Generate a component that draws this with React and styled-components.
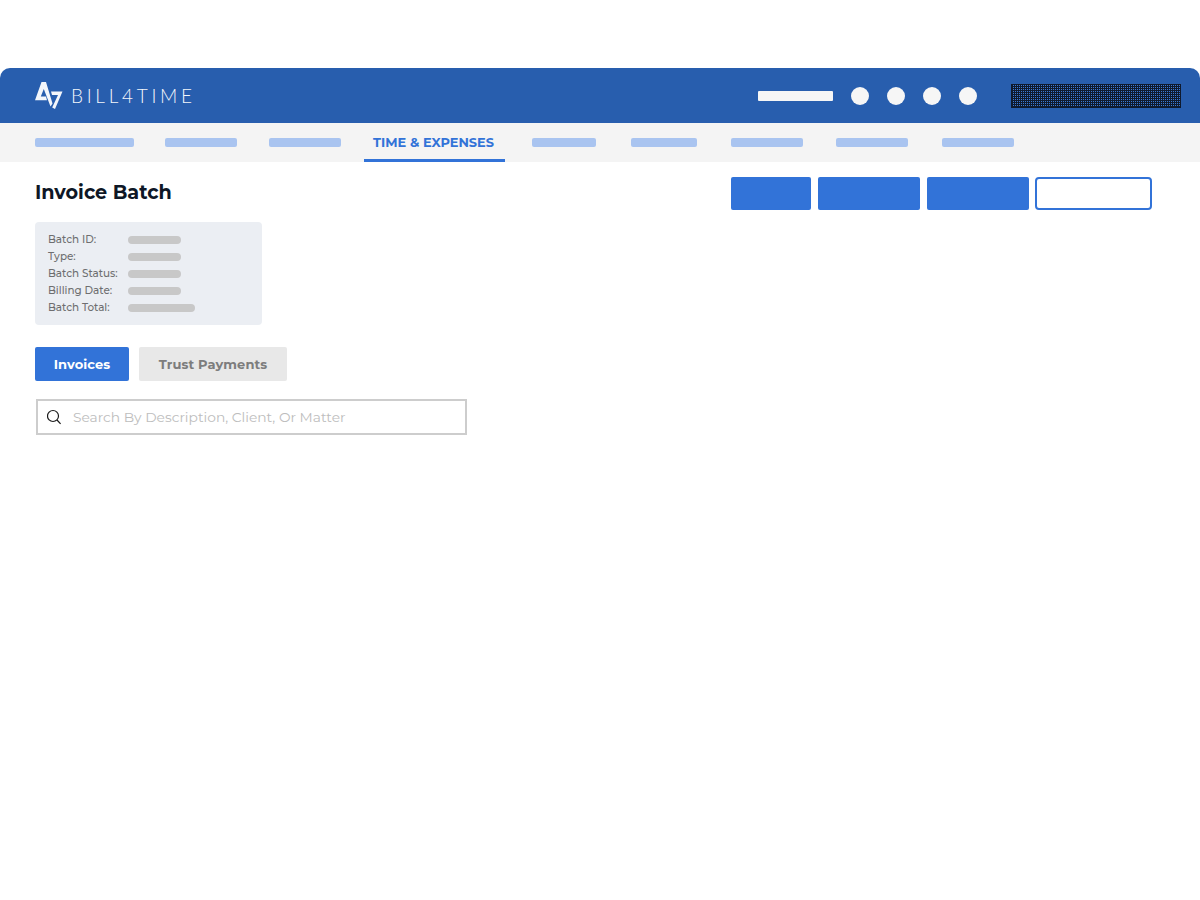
import React from 'react';
import styled, { createGlobalStyle } from 'styled-components';

const GlobalStyle = createGlobalStyle`
  body {
    margin: 0;
    background: #fff;
    font-family: "Montserrat", "Inter", "Liberation Sans", sans-serif;
  }
`;

const Page = styled.div`
  padding-top: 68px;
`;

const Header = styled.header`
  display: flex;
  align-items: center;
  justify-content: space-between;
  height: 55px;
  padding: 0 19px 0 35px;
  background: #285eae;
  border-radius: 10px 10px 0 0;
`;

const Brand = styled.div`
  display: flex;
  align-items: center;
  gap: 8px;
`;

const BrandName = styled.span`
  font-family: "Lato", sans-serif;
  font-weight: 300;
  font-size: 19px;
  letter-spacing: 3.7px;
  line-height: 1;
  color: #f3f6fb;
`;

const HeaderRight = styled.div`
  display: flex;
  align-items: center;
`;

const UserBar = styled.div`
  width: 75px;
  height: 10px;
  margin-right: 18px;
  background: #f6f6f6;
  border-radius: 1px;
`;

const Circle = styled.div`
  width: 18px;
  height: 18px;
  margin-right: 18px;
  background: #f6f6f6;
  border-radius: 50%;
`;

const SearchBlock = styled.div`
  box-sizing: border-box;
  width: 170px;
  height: 24px;
  margin-left: 16px;
  border: 1px solid #0f1a2e;
  background: repeating-conic-gradient(#3a78d4 0 25%, #0f1a2e 0 100%) 0 0 / 2px 2px;
`;

const Nav = styled.nav`
  display: flex;
  align-items: center;
  height: 39px;
  padding-left: 35px;
  background: #f4f4f4;
`;

const NavBar = styled.div`
  width: ${p => p.$w}px;
  height: 9px;
  margin-right: ${p => p.$gap}px;
  background: #a9c4f0;
  border-radius: 2px;
`;

const NavTab = styled.div`
  display: flex;
  align-items: center;
  justify-content: center;
  box-sizing: border-box;
  align-self: stretch;
  width: 141px;
  margin-right: 27px;
  padding: 2px 2px 0 0;
  border-bottom: 3px solid #3273d8;
  font-size: 12.9px;
  font-weight: 700;
  color: #3273d8;
  white-space: nowrap;
`;

const Content = styled.main`
  padding: 15px 48px 0 35px;
`;

const TitleRow = styled.div`
  display: flex;
  align-items: center;
  justify-content: space-between;
`;

const Title = styled.h1`
  margin: -4px 0 0;
  font-size: 19.2px;
  font-weight: 700;
  color: #0e1726;
`;

const Actions = styled.div`
  display: flex;
  gap: 7px;
`;

const ActionButton = styled.div`
  box-sizing: border-box;
  width: ${p => p.$w}px;
  height: 33px;
  margin-left: ${p => (p.$outline ? -1 : 0)}px;
  background: ${p => (p.$outline ? '#fff' : '#3273d8')};
  border: ${p => (p.$outline ? '2px solid #3273d8' : 'none')};
  border-radius: ${p => (p.$outline ? 4 : 2)}px;
`;

const InfoCard = styled.div`
  display: grid;
  grid-template-columns: 80px 1fr;
  grid-auto-rows: 17px;
  align-items: center;
  box-sizing: border-box;
  width: 227px;
  height: 103px;
  margin-top: 12px;
  padding: 9px 13px;
  background: #ebeef3;
  border-radius: 4px;
`;

const InfoLabel = styled.span`
  font-size: 10.4px;
  font-weight: 500;
  color: #6e6e70;
  white-space: nowrap;
`;

const InfoBar = styled.div`
  width: ${p => p.$w}px;
  height: 8px;
  background: #c8c8c8;
  border-radius: 4px;
`;

const Tabs = styled.div`
  display: flex;
  gap: 10px;
  margin-top: 22px;
`;

const Tab = styled.div`
  display: flex;
  align-items: center;
  justify-content: center;
  width: ${p => p.$w}px;
  height: 34px;
  font-size: 13px;
  letter-spacing: 0.1px;
  font-weight: 700;
  background: ${p => (p.$active ? '#3273d8' : '#e8e8e8')};
  color: ${p => (p.$active ? '#fff' : '#7d7d7d')};
  border-radius: 2px;
`;

const SearchBox = styled.div`
  display: flex;
  align-items: center;
  gap: 10px;
  box-sizing: border-box;
  width: 431px;
  height: 36px;
  margin: 18px 0 0 1px;
  padding-left: 9px;
  border: 2px solid #cdcdcd;
`;

const Placeholder = styled.span`
  font-size: 13.8px;
  color: #bdbdbd;
`;

const Logo = () => (
  <svg width="28" height="27" viewBox="0 0 28 27" fill="#f3f6fb">
    <path d="M6.5 0 L11 0 L17.5 21.5 L15.5 24.5 L8.8 7 L5.8 14.6 L11 14.6 L12 18.2 L0 18.2 Z" />
    <path d="M16 9.5 L27.5 9.5 L20 27 L17.2 25.6 L23 13 L17 13 Z" />
  </svg>
);

const SearchIcon = () => (
  <svg width="16" height="16" viewBox="0 0 16 16" fill="none" stroke="#1a1a1a" strokeWidth="1.2">
    <circle cx="6" cy="7" r="5.5" />
    <path d="M10 11 L13.6 14.8" />
  </svg>
);

const infoRows = [
  ['Batch ID:', 53],
  ['Type:', 53],
  ['Batch Status:', 53],
  ['Billing Date:', 53],
  ['Batch Total:', 67],
];

export default function App() {
  return (
    <Page>
      <GlobalStyle />
      <Header>
        <Brand>
          <Logo />
          <BrandName>BILL4TIME</BrandName>
        </Brand>
        <HeaderRight>
          <UserBar />
          <Circle />
          <Circle />
          <Circle />
          <Circle />
          <SearchBlock />
        </HeaderRight>
      </Header>
      <Nav>
        <NavBar $w={99} $gap={31} />
        <NavBar $w={72} $gap={32} />
        <NavBar $w={72} $gap={23} />
        <NavTab>TIME &amp; EXPENSES</NavTab>
        <NavBar $w={64} $gap={35} />
        <NavBar $w={66} $gap={34} />
        <NavBar $w={72} $gap={33} />
        <NavBar $w={72} $gap={34} />
        <NavBar $w={72} $gap={0} />
      </Nav>
      <Content>
        <TitleRow>
          <Title>Invoice Batch</Title>
          <Actions>
            <ActionButton $w={80} />
            <ActionButton $w={102} />
            <ActionButton $w={102} />
            <ActionButton $w={117} $outline />
          </Actions>
        </TitleRow>
        <InfoCard>
          {infoRows.map(([label, w]) => (
            <React.Fragment key={label}>
              <InfoLabel>{label}</InfoLabel>
              <InfoBar $w={w} />
            </React.Fragment>
          ))}
        </InfoCard>
        <Tabs>
          <Tab $active $w={94}>Invoices</Tab>
          <Tab $w={148}>Trust Payments</Tab>
        </Tabs>
        <SearchBox>
          <SearchIcon />
          <Placeholder>Search By Description, Client, Or Matter</Placeholder>
        </SearchBox>
      </Content>
    </Page>
  );
}
